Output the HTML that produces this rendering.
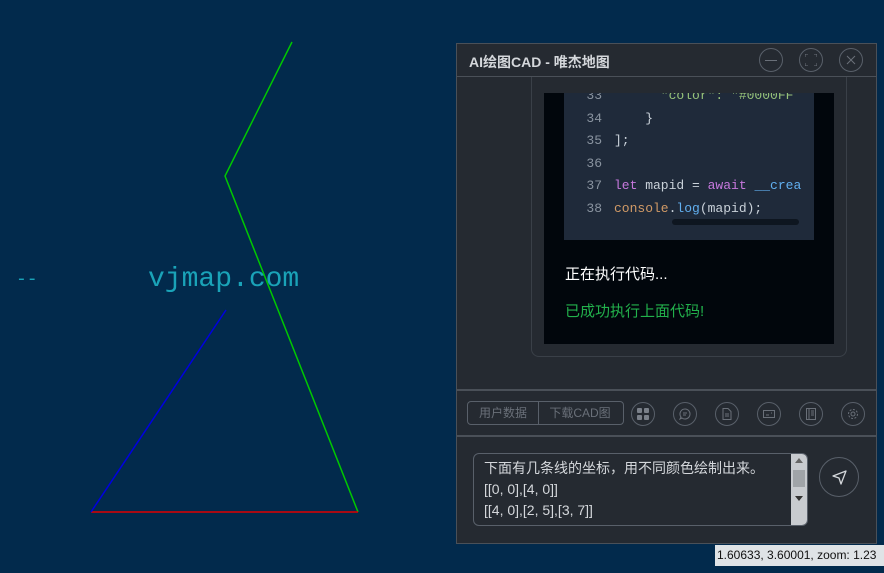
<!DOCTYPE html><html><head><meta charset="utf-8"><style>
body{margin:0;width:884px;height:573px;background:#022a4c;position:relative;overflow:hidden;font-family:"Liberation Sans","Noto Sans CJK SC",sans-serif}
.a{position:absolute}
.ic{position:absolute;width:22px;height:22px;border:1px solid #59606a;border-radius:50%;top:402px}
.ic svg{position:absolute;left:5px;top:5px}
.code{font-family:"Liberation Mono",monospace;font-size:13px;color:#c9d1d9;white-space:pre;line-height:22.5px}
.ln{color:#8a94a0;display:inline-block;width:38px;text-align:right;margin-right:12px}
</style></head><body>
<svg class="a" style="left:0;top:0" width="884" height="573">
<polyline points="292,42 225,176 358,512" fill="none" stroke="#00c800" stroke-width="1.5"/>
<line x1="91" y1="512" x2="358" y2="512" stroke="#e00000" stroke-width="1.5"/>
<line x1="91" y1="512" x2="226" y2="310" stroke="#0000e0" stroke-width="1.5"/>
<text x="16" y="284" fill="#1aa3b8" font-family="Liberation Mono" font-size="18">--</text>
<text x="148" y="286" fill="#1aa3b8" font-family="Liberation Mono" font-size="28">vjmap.com</text>
</svg>
<div class="a" style="left:456px;top:43px;width:419px;height:499px;background:#252a31;border:1px solid #4a5058"></div>
<div class="a" style="left:469px;top:52px;color:#d4d7db;font-size:14px;font-weight:bold">AI绘图CAD - 唯杰地图</div>
<div class="a" style="left:457px;top:76px;width:419px;height:1px;background:#4a5058"></div>
<div class="ic" style="left:759px;top:48px"><div class="a" style="left:5px;top:11px;width:12px;height:1px;background:#6a7079"></div></div>
<div class="ic" style="left:799px;top:48px"><svg width="12" height="12" fill="none" stroke="#6a7079"><path d="M0 3V0h3M9 0h3v3M12 9v3H9M3 12H0V9"/></svg></div>
<div class="ic" style="left:839px;top:48px"><svg width="12" height="12" fill="none" stroke="#6a7079"><path d="M2 2l8 8M10 2l-8 8"/></svg></div>
<div class="a" style="left:531px;top:77px;width:314px;height:279px;border:1px solid #3a4048;border-top:none;border-radius:0 0 8px 8px"></div>
<div class="a" style="left:544px;top:93px;width:290px;height:251px;background:#01060c"></div>
<div class="a" style="left:564px;top:93px;width:250px;height:147px;background:#1f2a3a;overflow:hidden">
<div class="code" style="margin-top:-8px"><span class="ln">33</span><span style="color:#98c379">      "color": "#0000FF</span>
<span class="ln">34</span>    }
<span class="ln">35</span>];
<span class="ln">36</span>
<span class="ln">37</span><span style="color:#c678dd">let</span> mapid = <span style="color:#c678dd">await</span> <span style="color:#61afef">__crea</span>
<span class="ln">38</span><span style="color:#d19a66">console</span>.<span style="color:#61afef">log</span>(mapid);</div>
<div class="a" style="left:108px;top:126px;width:127px;height:6px;background:#0e1620;border-radius:3px"></div></div>
<div class="a" style="left:565px;top:263px;color:#fff;font-size:15px">正在执行代码...</div>
<div class="a" style="left:565px;top:300px;color:#22b14c;font-size:15px">已成功执行上面代码!</div>
<div class="a" style="left:457px;top:389px;width:419px;height:2px;background:#4a5058"></div>
<div class="a" style="left:457px;top:435px;width:419px;height:2px;background:#4a5058"></div>
<div class="a" style="left:467px;top:401px;width:155px;height:22px;border:1px solid #59606a;border-radius:4px;color:#6a7079;font-size:12px;line-height:22px">
<span style="display:inline-block;width:70px;text-align:center;border-right:1px solid #59606a">用户数据</span><span style="display:inline-block;width:82px;text-align:center">下载CAD图</span></div>
<div class="ic" style="left:631px"><svg width="12" height="12" fill="#7a8089"><rect x="0" y="0" width="5" height="5" rx="1"/><rect x="7" y="0" width="5" height="5" rx="1"/><rect x="0" y="7" width="5" height="5" rx="1"/><rect x="7" y="7" width="5" height="5" rx="1"/></svg></div>
<div class="ic" style="left:673px"><svg width="12" height="12" fill="none" stroke="#6a7079"><path d="M6 1a5 5 0 1 1-3 9l-2 1 1-2A5 5 0 0 1 6 1zM4 5h4M4 7h3"/></svg></div>
<div class="ic" style="left:715px"><svg width="12" height="12" fill="none" stroke="#6a7079"><path d="M2 0.5h5l3 3v8H2zM4 6h4M4 8h4"/></svg></div>
<div class="ic" style="left:757px"><svg width="12" height="12" fill="none" stroke="#6a7079"><path d="M0.5 2.5h11v7H0.5zM3 7h3M8 5h1"/></svg></div>
<div class="ic" style="left:799px"><svg width="12" height="12" fill="none" stroke="#6a7079"><path d="M1.5 0.5h9v11h-9zM4 0.5v11M6 3h3M6 5h3M6 7h3"/></svg></div>
<div class="ic" style="left:841px"><svg width="12" height="12" fill="none" stroke="#6a7079"><circle cx="6" cy="6" r="2"/><circle cx="6" cy="6" r="4.5" stroke-dasharray="2 1.5"/></svg></div>
<div class="a" style="left:473px;top:453px;width:333px;height:71px;border:1px solid #59606a;border-radius:6px;overflow:hidden">
<div style="padding:4px 10px;color:#d4d7db;font-size:14px;line-height:21px">下面有几条线的坐标，用不同颜色绘制出来。<br>[[0, 0],[4, 0]]<br>[[4, 0],[2, 5],[3, 7]]</div>
<div class="a" style="right:0;top:0;width:16px;height:71px;background:#c8cbcf"><div class="a" style="left:2px;top:16px;width:12px;height:17px;background:#a0a4a8"></div>
<div class="a" style="left:4px;top:4px;width:0;height:0;border:4px solid transparent;border-bottom:5px solid #666;border-top:none"></div>
<div class="a" style="left:4px;top:42px;width:0;height:0;border:4px solid transparent;border-top:5px solid #333;border-bottom:none"></div></div></div>
<div class="a" style="left:819px;top:457px;width:38px;height:38px;border:1px solid #59606a;border-radius:50%"><svg class="a" style="left:12px;top:12px" width="15" height="15" fill="none" stroke="#d4d7db" stroke-width="1.3" stroke-linejoin="round"><path d="M1 6L14 1 9 14 7 8z"/></svg></div>
<div class="a" style="left:715px;top:545px;width:169px;height:21px;background:#dfe3e6;color:#111;font-size:12px;line-height:21px;padding-left:2px;white-space:nowrap">1.60633, 3.60001, zoom: 1.23</div>
</body></html>
